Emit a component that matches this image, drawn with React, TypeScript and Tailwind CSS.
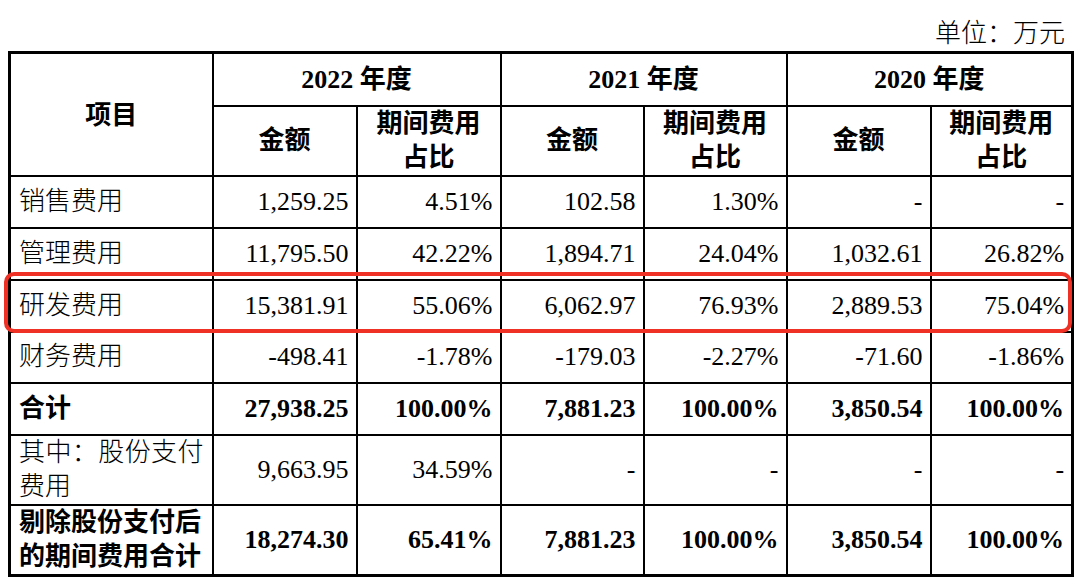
const font = "font-['Liberation_Serif','Noto_Sans_CJK_SC',serif]";

type Row = {
  label: React.ReactNode;
  values: string[];
  bold?: boolean;
  tall?: boolean;
  h: string;
};

const rows: Row[] = [
  { label: "销售费用", values: ["1,259.25", "4.51%", "102.58", "1.30%", "-", "-"], h: "h-[52px]" },
  { label: "管理费用", values: ["11,795.50", "42.22%", "1,894.71", "24.04%", "1,032.61", "26.82%"], h: "h-[52px]" },
  { label: "研发费用", values: ["15,381.91", "55.06%", "6,062.97", "76.93%", "2,889.53", "75.04%"], h: "h-[52px]" },
  { label: "财务费用", values: ["-498.41", "-1.78%", "-179.03", "-2.27%", "-71.60", "-1.86%"], h: "h-[51px]" },
  { label: "合计", values: ["27,938.25", "100.00%", "7,881.23", "100.00%", "3,850.54", "100.00%"], bold: true, h: "h-[52px]" },
  {
    label: (
      <>
        <span className="flex justify-between">
          {"其中：股份支付".split("").map((c, i) => (
            <span key={i}>{c}</span>
          ))}
        </span>
        <span className="block">费用</span>
      </>
    ),
    values: ["9,663.95", "34.59%", "-", "-", "-", "-"],
    tall: true,
    h: "h-[69px]",
  },
  {
    label: (
      <>
        <span className="block">剔除股份支付后</span>
        <span className="block">的期间费用合计</span>
      </>
    ),
    values: ["18,274.30", "65.41%", "7,881.23", "100.00%", "3,850.54", "100.00%"],
    bold: true,
    tall: true,
    h: "h-[66px]",
  },
];

const years = ["2022 年度", "2021 年度", "2020 年度"];

export default function App() {
  return (
    <div className={`w-[1080px] h-[579px] bg-white text-black ${font} text-[26px] leading-none`}>
      <div className="h-[51px] flex items-center justify-end pr-[15px] pt-[16px] font-light">单位：万元</div>

      <div className="relative pl-[8px]">
        <table className="table-fixed border-collapse border-[3px] border-black w-[1066px]">
          <colgroup>
            <col className="w-[203px]" />
            <col className="w-[144px]" />
            <col className="w-[144px]" />
            <col className="w-[143px]" />
            <col className="w-[143px]" />
            <col className="w-[144px]" />
            <col className="w-[142px]" />
          </colgroup>
          <thead>
            <tr className="h-[53px]">
              <th rowSpan={2} className="border-2 border-black font-bold align-middle pt-[4px]">
                项目
              </th>
              {years.map((y) => (
                <th key={y} colSpan={2} className="border-2 border-black font-bold align-middle pt-[2px]">
                  {y}
                </th>
              ))}
            </tr>
            <tr className="h-[68px]">
              {years.map((y) => (
                <>
                  <th key={y + "a"} className="border-2 border-black font-bold align-middle">
                    金额
                  </th>
                  <th key={y + "b"} className="border-2 border-black font-bold align-middle leading-[34px]">
                    期间费用
                    <br />
                    占比
                  </th>
                </>
              ))}
            </tr>
          </thead>
          <tbody>
            {rows.map((r, i) => (
              <tr key={i} className={r.h}>
                <td
                  className={`border-2 border-black text-left pl-[8px] pr-[8px] align-middle ${
                    r.bold ? "font-bold" : "font-light"
                  } ${r.tall ? "leading-[34px]" : ""}`}
                >
                  {r.label}
                </td>
                {r.values.map((v, j) => (
                  <td
                    key={j}
                    className={`border-2 border-black text-right pr-[7px] align-middle ${
                      r.bold ? "font-bold" : "font-normal"
                    }`}
                  >
                    {v}
                  </td>
                ))}
              </tr>
            ))}
          </tbody>
        </table>

        {/* highlight around 研发费用 */}
        <div className="absolute left-[4px] top-[221px] w-[1068px] h-[61px] border-[4px] border-[#ee3124] rounded-[10px] pointer-events-none" />
      </div>
    </div>
  );
}
